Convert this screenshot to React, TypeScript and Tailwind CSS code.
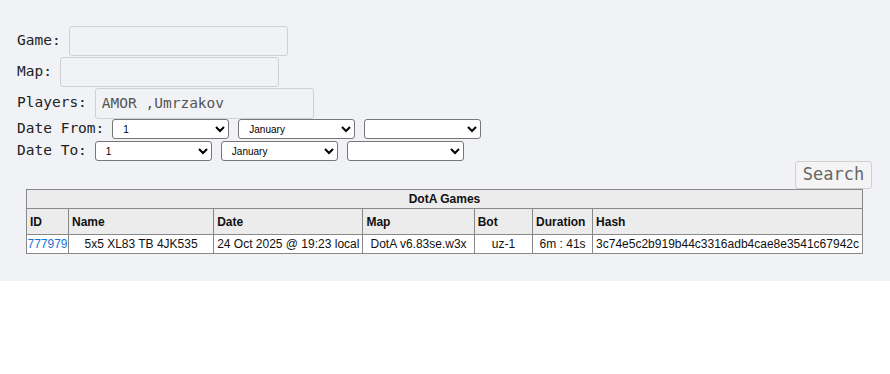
const mono = { fontFamily: '"DejaVu Sans Mono", monospace' };

const days = Array.from({ length: 31 }, (_, i) => String(i + 1));
const months = [
  "January",
  "February",
  "March",
  "April",
  "May",
  "June",
  "July",
  "August",
  "September",
  "October",
  "November",
  "December",
];

const DateSelects = () => (
  <div className="flex items-center gap-[9px]">
    <select className="h-[20px] w-[117px] rounded-[3px] border border-[#767676] bg-white pl-[6px] font-['Liberation_Sans',Arial,sans-serif] text-[10px] text-black">
      {days.map((d) => (
        <option key={d}>{d}</option>
      ))}
    </select>
    <select className="h-[20px] w-[117px] rounded-[3px] border border-[#767676] bg-white pl-[6px] font-['Liberation_Sans',Arial,sans-serif] text-[10px] text-black">
      {months.map((m) => (
        <option key={m}>{m}</option>
      ))}
    </select>
    <select className="h-[20px] w-[117px] rounded-[3px] border border-[#767676] bg-white font-['Liberation_Sans',Arial,sans-serif] text-[10px] text-black">
      <option></option>
    </select>
  </div>
);

const cell = "border border-[#888] px-[3px]";

export default function App() {
  return (
    <div className="min-h-[374px] bg-white">
      <div className="bg-[#f1f2f6] pt-[26px] pb-[27px]">
        <div className="pl-[17px] text-[14.5px] text-[#222]" style={mono}>
          <div className="flex h-[30px] items-center gap-[8px]">
            <span>Game:</span>
            <input className="h-[30px] w-[219px] rounded-[3px] border border-[#cfd0d6] bg-transparent px-[6px]" />
          </div>
          <div className="flex h-[31px] items-center gap-[8px]">
            <span>Map:</span>
            <input className="h-[30px] w-[219px] rounded-[3px] border border-[#cfd0d6] bg-transparent px-[6px]" />
          </div>
          <div className="flex h-[32px] items-center gap-[8px]">
            <span>Players:</span>
            <input
              defaultValue="AMOR ,Umrzakov"
              className="h-[31px] w-[219px] rounded-[3px] border border-[#cfd0d6] bg-transparent px-[6px] text-[#555]"
            />
          </div>
          <div className="flex h-[20px] items-center gap-[8px]">
            <span>Date From:</span>
            <DateSelects />
          </div>
          <div className="mt-[2px] flex h-[20px] items-center gap-[8px]">
            <span>Date To:</span>
            <DateSelects />
          </div>
        </div>
        <div className="flex justify-end pr-[18px]">
          <button
            className="h-[28px] w-[77px] rounded-[3px] border border-[#d0d0d0] bg-[#f4f4f4] text-[17px] text-[#666]"
            style={mono}
          >
            Search
          </button>
        </div>
        <table className="ml-[26px] w-[837px] border-collapse border border-[#888] font-['Liberation_Sans',Arial,sans-serif] text-[12px] text-[#111]">
          <thead>
            <tr className="h-[19px] bg-[#ececec]">
              <th colSpan={7} className={`${cell} text-center font-bold`}>
                DotA Games
              </th>
            </tr>
            <tr className="h-[26px] bg-[#ececec] text-left font-bold">
              <th className={`${cell} w-[42px]`}>ID</th>
              <th className={`${cell} w-[147px]`}>Name</th>
              <th className={`${cell} w-[147px]`}>Date</th>
              <th className={`${cell} w-[112px]`}>Map</th>
              <th className={`${cell} w-[59px]`}>Bot</th>
              <th className={`${cell} w-[60px]`}>Duration</th>
              <th className={cell}>Hash</th>
            </tr>
          </thead>
          <tbody>
            <tr className="h-[19px] bg-white">
              <td className="border border-[#888] px-0 text-center">
                <a className="text-[#1a73d9]" href="#">
                  777979
                </a>
              </td>
              <td className={`${cell} text-center`}>5x5 XL83 TB 4JK535</td>
              <td className={`${cell} whitespace-nowrap text-center`}>
                24 Oct 2025 @ 19:23 local
              </td>
              <td className={`${cell} text-center`}>DotA v6.83se.w3x</td>
              <td className={`${cell} text-center`}>uz-1</td>
              <td className={`${cell} text-center`}>6m : 41s</td>
              <td className={`${cell} whitespace-nowrap text-center`}>
                3c74e5c2b919b44c3316adb4cae8e3541c67942c
              </td>
            </tr>
          </tbody>
        </table>
      </div>
    </div>
  );
}
